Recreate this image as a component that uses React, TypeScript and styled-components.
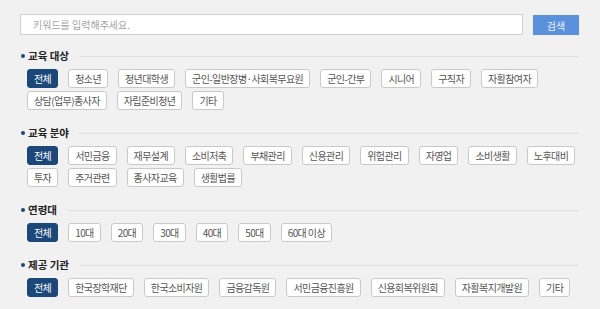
import { FC, useState } from "react";
import styled, { createGlobalStyle } from "styled-components";

const GlobalStyle = createGlobalStyle`
  html, body {
    margin: 0;
    padding: 0;
    background-color: #f1f1f1;
  }
  body {
    font-family: "Noto Sans CJK KR", "Noto Sans", sans-serif;
  }
`;

const Wrapper = styled.div`
  width: 600px;
  height: 309px;
  box-sizing: border-box;
  padding: 14px 21px 0 20px;
  overflow: hidden;
`;

const SearchBar = styled.form`
  display: flex;
  align-items: flex-start;
  gap: 10px;
  margin-bottom: 15px;
`;

const SearchInput = styled.input`
  flex: 1;
  height: 21px;
  box-sizing: border-box;
  padding: 0 12px;
  border: 1px solid #cfcfcf;
  background-color: #ffffff;
  font-family: inherit;
  font-size: 10px;
  color: #333;
  outline: none;

  &::placeholder {
    color: #a5a5a5;
  }
`;

const SearchButton = styled.button`
  width: 46px;
  height: 20px;
  margin-top: 1px;
  border: none;
  background-color: #5a90dc;
  color: #eaf1fb;
  font-family: inherit;
  font-size: 10px;
  padding: 0;
`;

const Section = styled.section`
  margin-bottom: 17px;
`;

const TitleRow = styled.div`
  display: flex;
  align-items: center;
  height: 12px;
  margin-bottom: 7px;

  &::after {
    content: "";
    flex: 1;
    height: 1px;
    margin-left: 10px;
    background-color: #dedede;
  }
`;

const Bullet = styled.span`
  width: 4px;
  height: 4px;
  border-radius: 50%;
  background-color: #1b4779;
  margin: 0 3px 0 1px;
`;

const Title = styled.h3`
  margin: 0;
  font-size: 10.5px;
  font-weight: 700;
  color: #222;
  line-height: 12px;
`;

const ChipList = styled.div`
  display: flex;
  flex-wrap: wrap;
  gap: 3px 10px;
  padding-left: 7px;
`;

const Chip = styled.button<{ $active?: boolean }>`
  height: 19px;
  box-sizing: border-box;
  padding: 0 6px;
  border: 1px solid ${(p) => (p.$active ? "#1b4779" : "#c9c9c9")};
  border-radius: 3px;
  background-color: ${(p) => (p.$active ? "#1b4779" : "#ffffff")};
  color: ${(p) => (p.$active ? "#ffffff" : "#555555")};
  font-family: inherit;
  font-size: 10px;
  letter-spacing: -0.6px;
  line-height: 17px;
  white-space: nowrap;
`;

type Group = { title: string; items: string[] };

const groups: Group[] = [
  {
    title: "교육 대상",
    items: [
      "전체",
      "청소년",
      "정년대학생",
      "군인-일반장병·사회복무요원",
      "군인-간부",
      "시니어",
      "구직자",
      "자활참여자",
      "상담(업무)종사자",
      "자립준비청년",
      "기타",
    ],
  },
  {
    title: "교육 분야",
    items: [
      "전체",
      "서민금융",
      "재무설계",
      "소비저축",
      "부채관리",
      "신용관리",
      "위험관리",
      "자영업",
      "소비생활",
      "노후대비",
      "투자",
      "주거관련",
      "종사자교육",
      "생활법률",
    ],
  },
  {
    title: "연령대",
    items: ["전체", "10대", "20대", "30대", "40대", "50대", "60대 이상"],
  },
  {
    title: "제공 기관",
    items: [
      "전체",
      "한국장학재단",
      "한국소비자원",
      "금융감독원",
      "서민금융진흥원",
      "신용회복위원회",
      "자활복지개발원",
      "기타",
    ],
  },
];

const App: FC = () => {
  const [keyword, setKeyword] = useState("");
  const [selected, setSelected] = useState<string[]>(groups.map(() => "전체"));

  const handleSelect = (index: number, item: string) => {
    setSelected((prev) => prev.map((v, i) => (i === index ? item : v)));
  };

  return (
    <Wrapper>
      <GlobalStyle />
      <SearchBar onSubmit={(e) => e.preventDefault()}>
        <SearchInput
          placeholder="키워드를 입력해주세요."
          value={keyword}
          onChange={(e) => setKeyword(e.target.value)}
        />
        <SearchButton type="submit">검색</SearchButton>
      </SearchBar>
      {groups.map((group, index) => (
        <Section key={group.title}>
          <TitleRow>
            <Bullet />
            <Title>{group.title}</Title>
          </TitleRow>
          <ChipList>
            {group.items.map((item) => (
              <Chip
                key={item}
                $active={selected[index] === item}
                onClick={() => handleSelect(index, item)}
              >
                {item}
              </Chip>
            ))}
          </ChipList>
        </Section>
      ))}
    </Wrapper>
  );
};

export default App;
